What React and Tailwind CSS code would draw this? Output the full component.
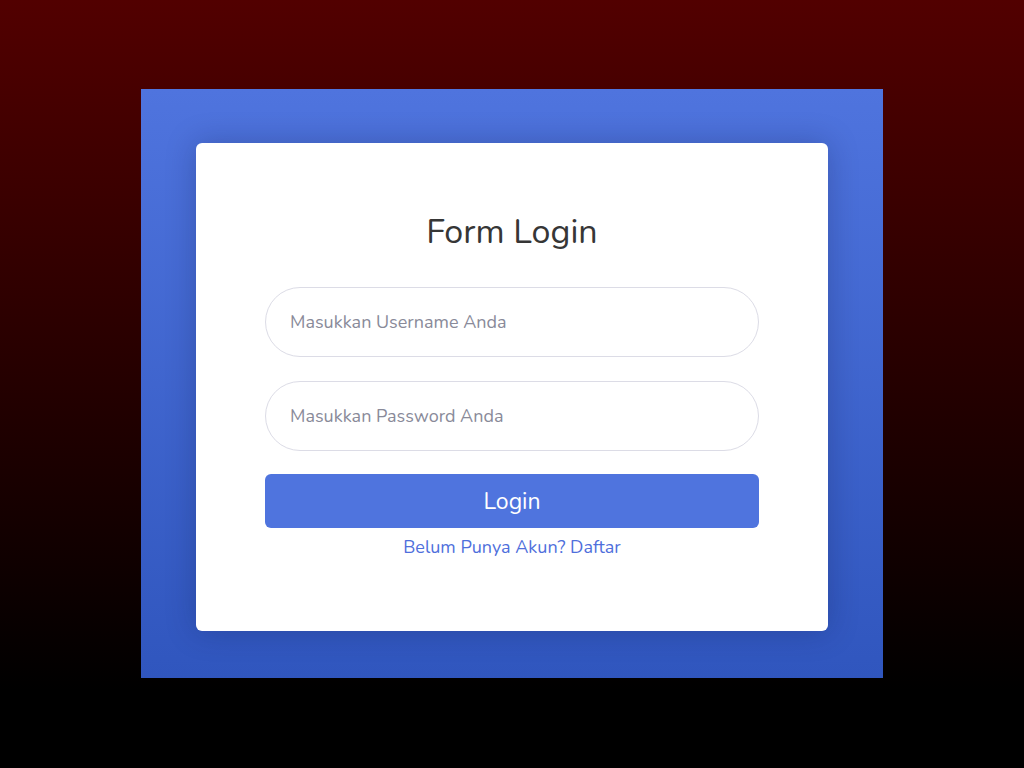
export default function App() {
  const font = { fontFamily: '"Nunito", "Noto Sans", "Open Sans", sans-serif' };
  return (
    <div
      className="w-[1024px] h-[768px] bg-[linear-gradient(to_bottom,#520000_0%,#000000_90%)] flex flex-col items-center pt-[89px]"
      style={font}
    >
      <div className="w-[742px] h-[589px] bg-[linear-gradient(to_bottom,#4f74de,#3056be)] flex justify-center pt-[54px]">
        <div className="w-[632px] h-[488px] bg-white rounded-[6px] shadow-[0_0_30px_rgba(10,20,60,0.25)] flex flex-col items-center pt-[69px]">
          <h1 className="text-[34px] leading-[40px] text-[#363636] font-normal">Form Login</h1>
          <div className="w-[494px] mt-[35px] flex flex-col">
            <input
              className="h-[70px] w-full rounded-full border border-[#dcdce6] px-[24px] text-[18px] text-[#555] placeholder:text-[#898a99] outline-none"
              placeholder="Masukkan Username Anda"
              style={font}
            />
            <input
              type="password"
              className="mt-[24px] h-[70px] w-full rounded-full border border-[#dcdce6] px-[24px] text-[18px] text-[#555] placeholder:text-[#898a99] outline-none"
              placeholder="Masukkan Password Anda"
              style={font}
            />
            <button
              className="mt-[23px] h-[54px] w-full rounded-[6px] bg-[#4f74de] text-white text-[23px] pt-[3px]"
              style={font}
            >
              Login
            </button>
            <a className="mt-[7px] text-center text-[18px] leading-[24px] text-[#4f6fdc]">
              Belum Punya Akun? Daftar
            </a>
          </div>
        </div>
      </div>
    </div>
  );
}
